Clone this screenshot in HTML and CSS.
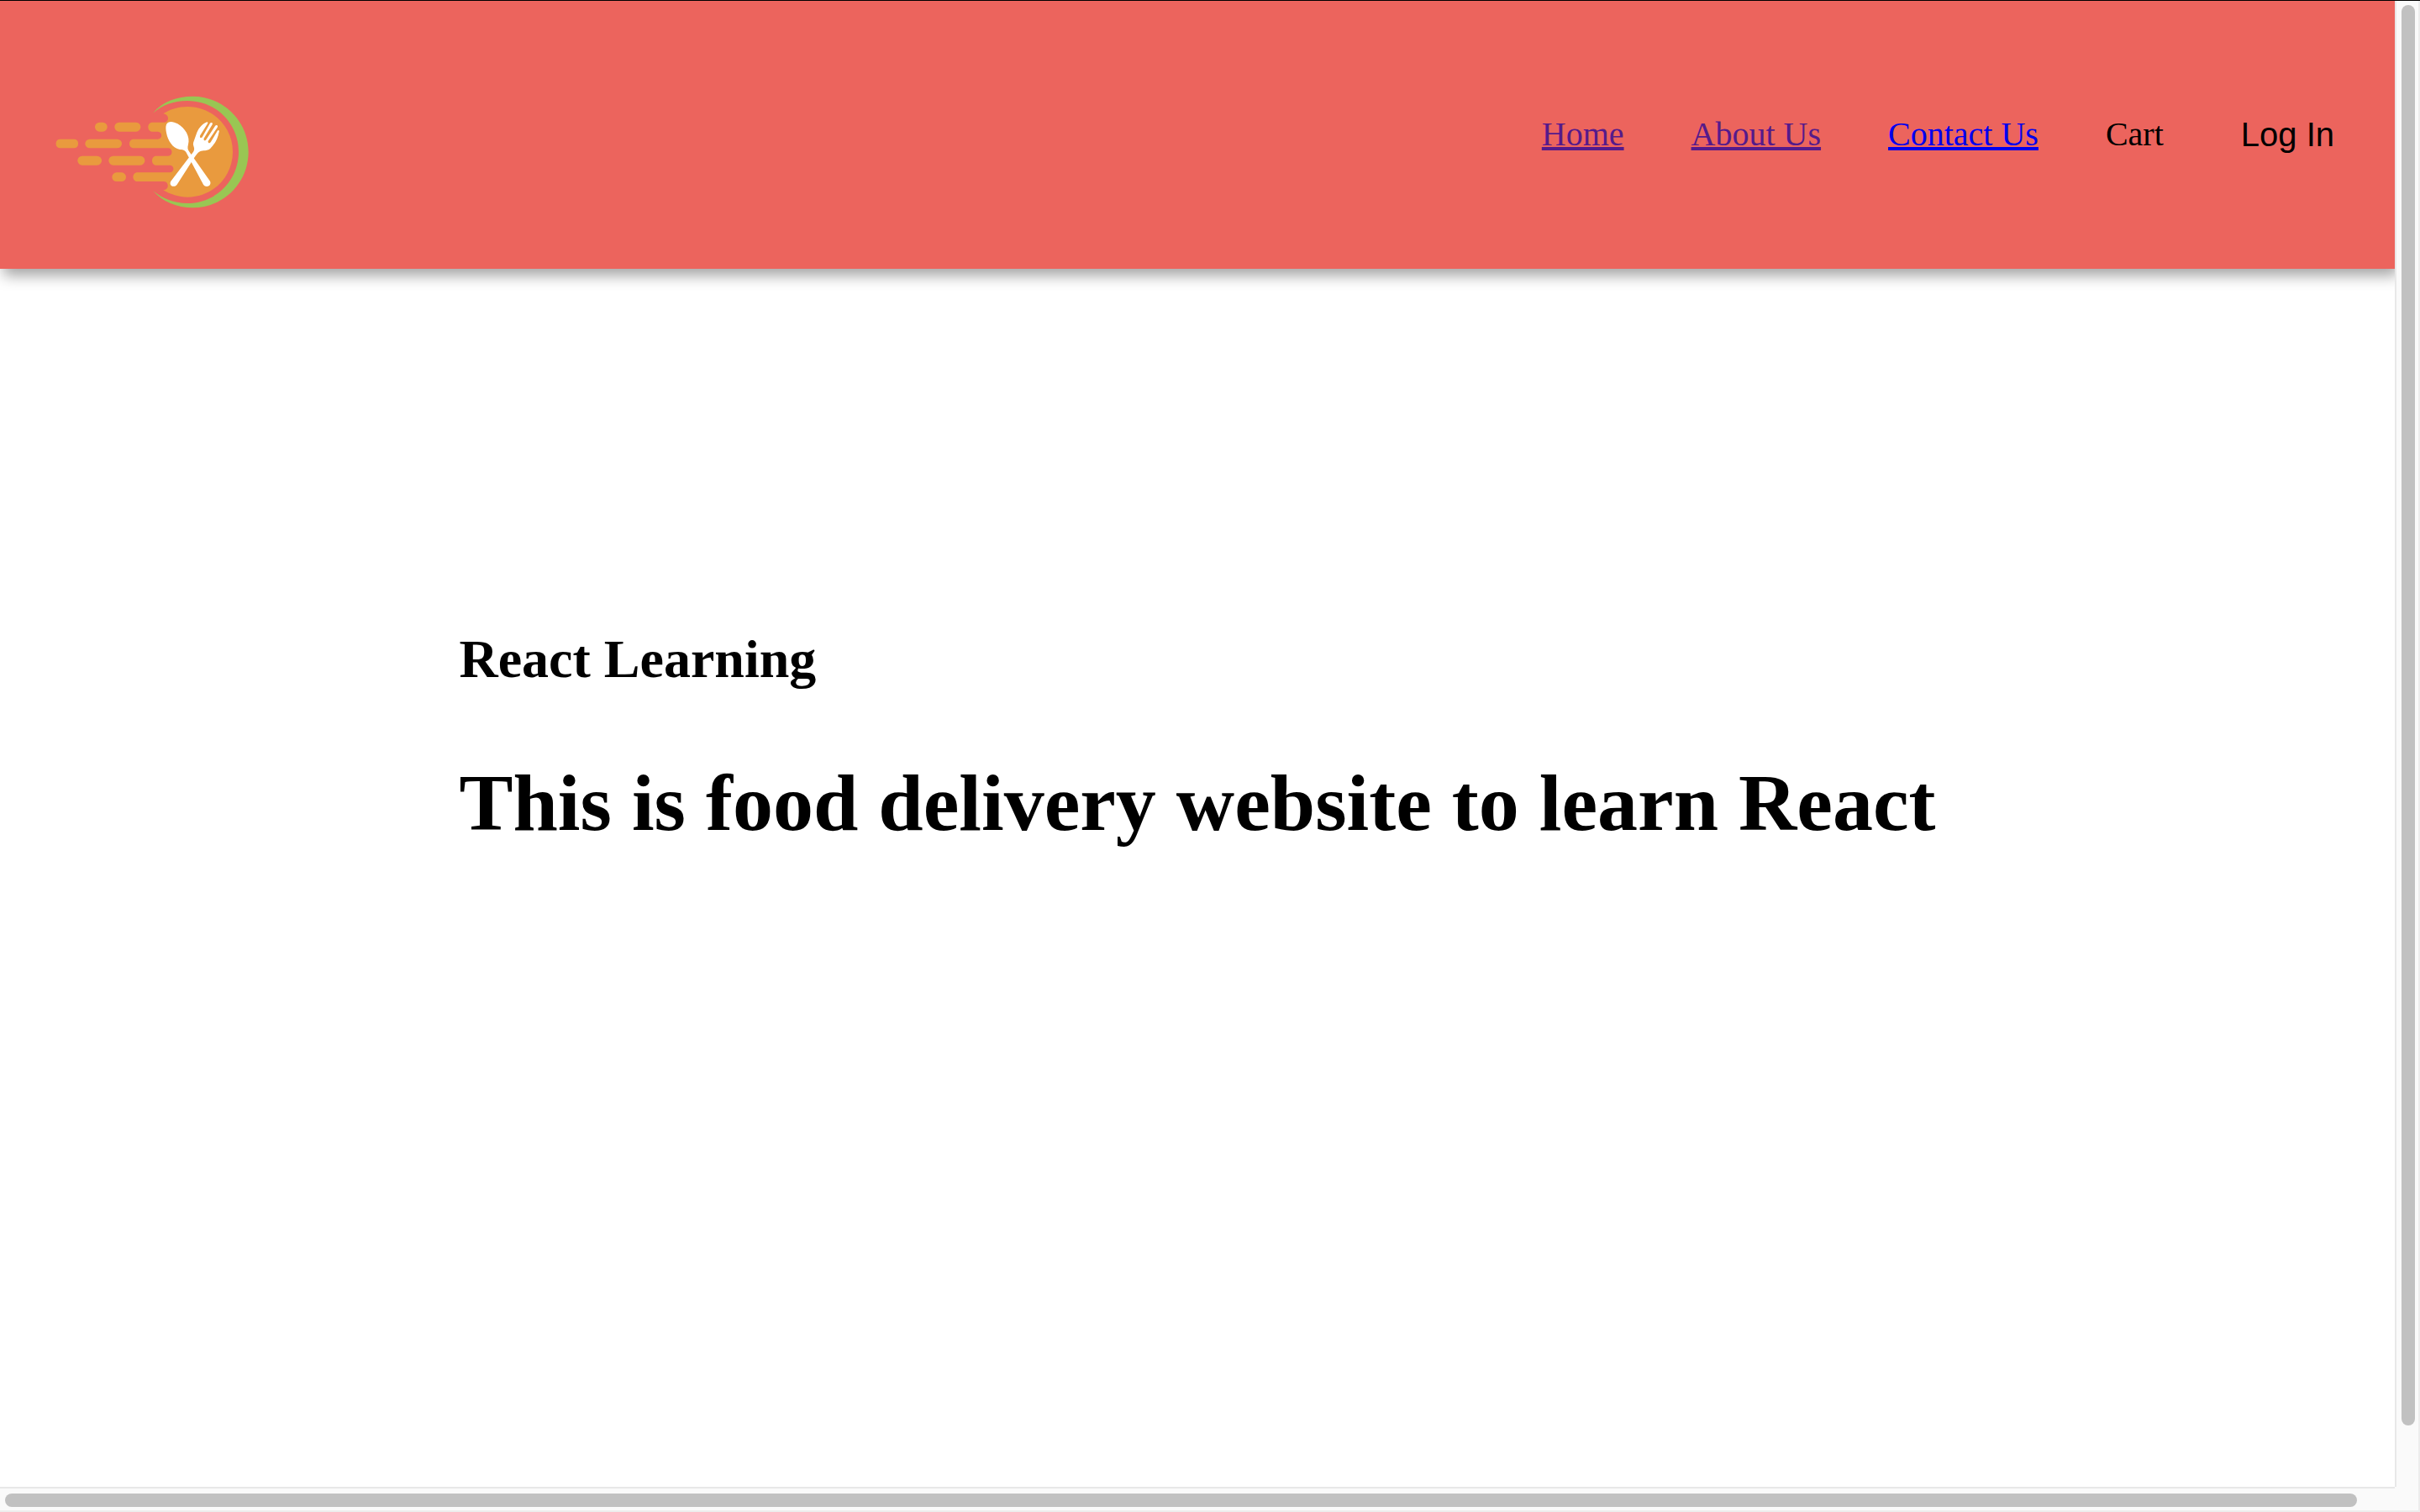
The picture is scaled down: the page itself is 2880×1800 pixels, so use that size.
FILE: index.html
```html
<!DOCTYPE html>
<html lang="en">
<head>
  <meta charset="utf-8">
  <title>Food Delivery</title>
  <link rel="stylesheet" href="styles.css">
</head>
<body>
  <div class="window">
    <div class="page">
      <header class="header">
        <svg class="logo" viewBox="0 0 780 480" role="img" aria-label="Food delivery logo">
          <path fill="#99c653" d="M396 104C430 62 482 44 538 44C648 44 737 133 737 242C737 353 648 442 538 442C482 442 430 420 396 381C430 409 468 425 519 426C621 426 702 344 702 242C702 141 621 60 519 60C468 61 430 75 396 104Z"/>
          <path fill="#e99a3e" d="M433 106C458 90 487 81 520 81C609 81 681 153 681 242C681 332 609 404 520 404C489 404 457 394 433 379C446 377 450 370 449 361C448 352 442 348 434 348H341C320 348 320 316 341 316H455C474 316 474 290 455 290H408C388 290 388 257 408 257H450C468 257 468 229 450 229H327C307 229 307 197 327 197H413C431 197 431 170 413 170H394C374 170 374 137 394 137H437C456 134 454 108 433 106Z"/>
          <g fill="#e99a3e">
            <rect x="189" y="137" width="44" height="33" rx="16"/>
            <rect x="259" y="137" width="93" height="33" rx="16"/>
            <rect x="50" y="197" width="79" height="32" rx="14"/>
            <rect x="154" y="197" width="131" height="32" rx="16"/>
            <rect x="127" y="257" width="86" height="33" rx="16"/>
            <rect x="238" y="257" width="129" height="33" rx="16"/>
            <rect x="250" y="316" width="50" height="32" rx="16"/>
          </g>
          <g fill="#fff">
            <path d="M444 145C450 131 468 133 484 142C511 157 530 189 522 216C519 228 520 233 525 241L600 347C607 363 586 373 576 359L516 247C511 236 505 235 492 234C466 229 449 202 444 174C442 163 441 152 444 145Z"/>
            <path d="M541 207L553 173C561 155 575 140 589 136C593 136 592 140 590 143L565 183C561 192 568 196 573 188L599 142C603 135 611 138 608 145L578 194C576 202 582 205 587 197L618 150C622 144 630 148 626 155L593 204C592 211 598 214 603 206L626 168C629 163 634 165 632 171C628 195 616 216 601 230C588 241 576 235 564 241C556 245 549 255 543 264L482 359C471 373 451 362 460 347L532 253C543 241 544 235 543 228C541 220 538 215 541 207Z"/>
          </g>
        </svg>
        <nav aria-label="Main">
          <ul class="nav-items">
            <li><a class="visited" href="#home">Home</a></li>
            <li><a class="visited" href="#about">About Us</a></li>
            <li><a href="#contact">Contact Us</a></li>
            <li>Cart</li>
            <li><button class="login" type="button">Log In</button></li>
          </ul>
        </nav>
      </header>
      <main class="content">
        <div class="intro">
          <h2>React Learning</h2>
          <h1>This is food delivery website to learn React</h1>
        </div>
      </main>
    </div>
    <div class="track track-vertical"><div class="thumb"></div></div>
    <div class="track track-horizontal"><div class="thumb"></div></div>
    <div class="corner"></div>
  </div>
</body>
</html>
```
FILE: styles.css
```css
* {
  box-sizing: border-box;
}

body {
  margin: 0;
  background: #fff;
  color: #000;
  font-family: "Liberation Serif", "Times New Roman", serif;
  font-size: 40px;
}

.window {
  display: grid;
  grid-template-columns: minmax(0, 1fr) 30px;
  grid-template-rows: 1fr 30px;
  min-height: 100vh;
  border-top: 1px solid #000;
}

.page {
  overflow: hidden;
}

.header {
  display: flex;
  align-items: center;
  justify-content: space-between;
  padding: 57px 60px 60px 50px;
  background: #ec645d;
  box-shadow: 4px 8px 16px rgba(0, 0, 0, 0.36);
}

.logo {
  display: block;
  width: 260px;
  margin-top: 42px;
}

.nav-items {
  display: flex;
  align-items: center;
  gap: 80px;
  margin: 0;
  padding: 0;
  list-style: none;
}

a {
  color: #0000ee;
  text-decoration-thickness: 4px;
  text-underline-offset: 2px;
}

a.visited {
  color: #551a8b;
}

.login {
  display: block;
  padding: 2px 12px 0;
  border: 0;
  background: none;
  color: #000;
  font-family: "Liberation Sans", Arial, sans-serif;
  font-size: 40px;
}

.content {
  display: flex;
  justify-content: center;
  padding-top: 428px;
}

h1,
h2 {
  margin: 0;
}

h2 {
  margin-bottom: 78px;
  font-size: 64px;
}

h1 {
  font-size: 96px;
}

.track,
.corner {
  background: #fafafa;
}

.track-vertical {
  padding: 5px 4px 73px 6px;
  border-right: 2px solid #ededed;
  border-left: 2px solid #e8e8e8;
}

.track-horizontal {
  padding: 6px 45px 4px 6px;
  border-top: 2px solid #e8e8e8;
  border-bottom: 2px solid #ededed;
}

.corner {
  border-right: 2px solid #ededed;
  border-bottom: 2px solid #ededed;
}

.thumb {
  height: 100%;
  border-radius: 8px;
  background: #c1c1c1;
}
```
